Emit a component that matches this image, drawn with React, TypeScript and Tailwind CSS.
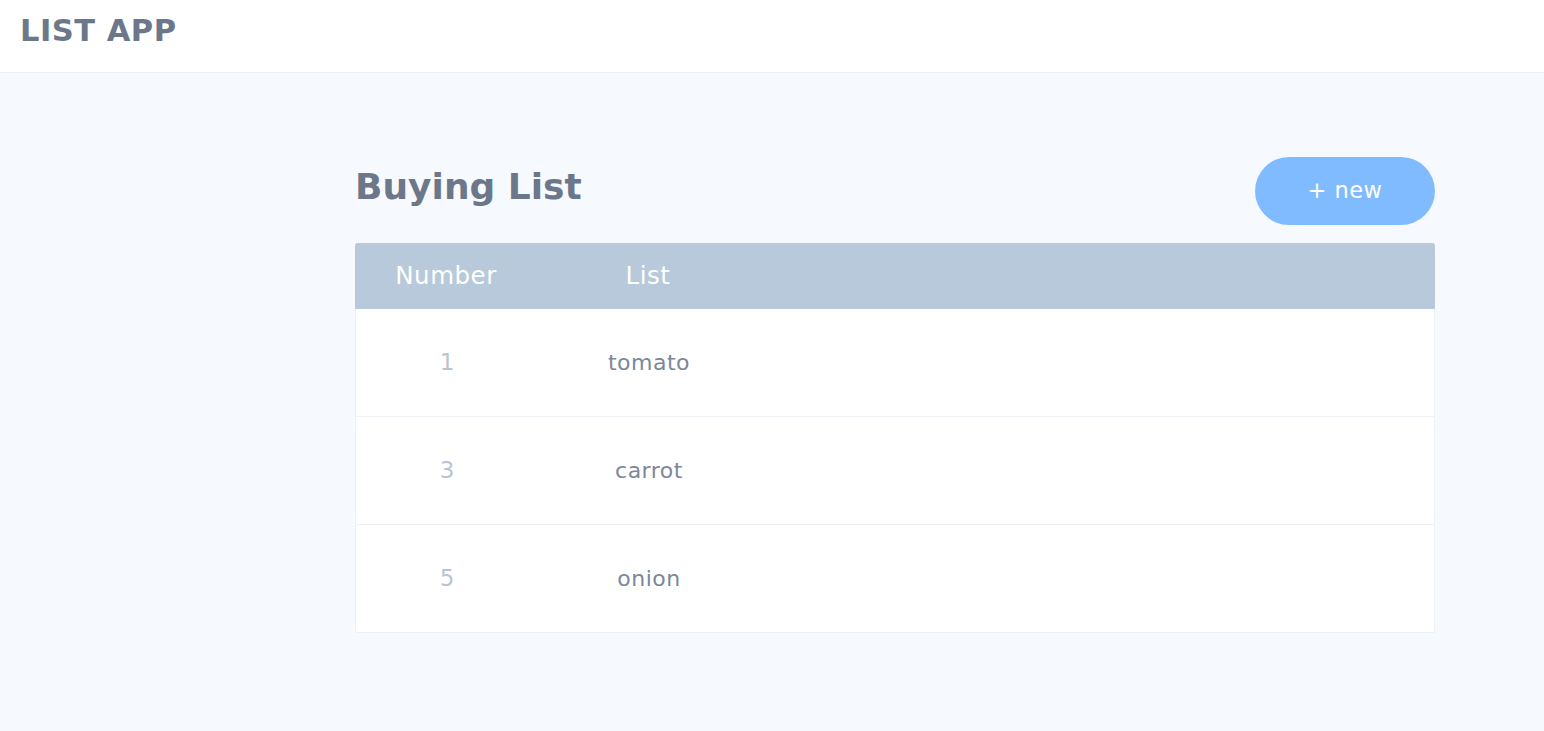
export default function App() {
  const items = [
    { num: 1, name: "tomato" },
    { num: 3, name: "carrot" },
    { num: 5, name: "onion" },
  ];

  return (
    <div className="min-h-screen bg-[#f6f9fd] font-['DejaVu_Sans',Verdana,sans-serif]">
      {/* Header */}
      <header className="h-[73px] bg-white border-b border-[#eef1f5] flex items-start px-5 pt-[8px]">
        <h1 className="text-[30.5px] font-bold text-[#6c778a] tracking-[0.5px]">LIST APP</h1>
      </header>

      <main className="ml-[355px] w-[1080px] pt-[84px]">
        <div className="flex items-center justify-between h-[68px] mb-[18px]">
          <h2 className="text-[36px] font-bold text-[#6c778a] pb-[9px]">Buying List</h2>
          <button className="w-[180px] h-[68px] rounded-full bg-[#80bbff] text-white text-[22.5px] tracking-[0.5px]">
            + new
          </button>
        </div>

        <div className="rounded-t-[3px] overflow-hidden">
          <div className="flex items-center h-[66px] bg-[#b7c9da] text-white text-[24.5px] tracking-[0.5px]">
            <div className="w-[182px] text-center">Number</div>
            <div className="w-[222px] text-center">List</div>
          </div>
          <div className="bg-white border-x border-b border-[#eef2f7]">
            {items.map((item, i) => (
              <div
                key={i}
                className={`flex items-center ${i > 0 ? "h-[108px] border-t border-[#eef2f7]" : "h-[107px]"}`}
              >
                <div className="w-[182px] text-center text-[23px] text-[#b7c4d4]">{item.num}</div>
                <div className="w-[222px] text-center text-[22px] text-[#7a8899] tracking-[0.5px]">{item.name}</div>
              </div>
            ))}
          </div>
        </div>
      </main>
    </div>
  );
}
